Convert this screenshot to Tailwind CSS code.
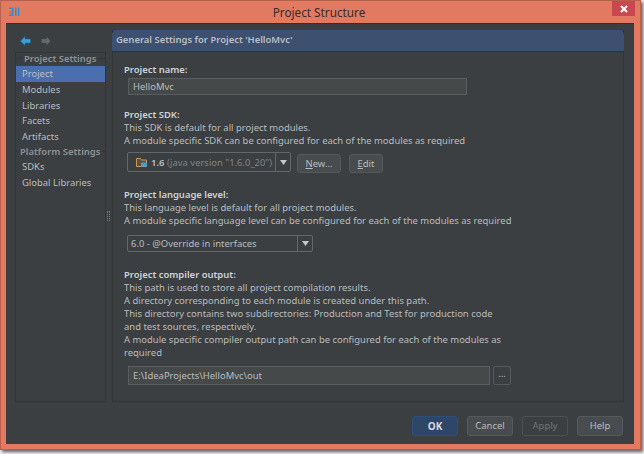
<!DOCTYPE html>
<html lang="en">
<head>
  <meta charset="UTF-8" />
  <title>Project Structure</title>
  <script src="https://cdn.jsdelivr.net/npm/@tailwindcss/browser@4"></script>
</head>
<body class="bg-[#f0f0f0] w-[644px] h-[454px] overflow-hidden font-['Noto_Sans','Open_Sans',sans-serif] text-[9.45px] leading-[13px] text-[#b9bcbf]">
  <!-- Window -->
  <div class="w-[641px] h-[450px] flex flex-col bg-[#e27a62] border border-[#b9604d] shadow-[2px_2px_3px_rgba(0,0,0,0.6)]">
    <!-- Title bar -->
    <div class="h-[22px] shrink-0 flex items-start relative">
      <svg class="ml-[7px] mt-[5px]" width="12" height="12" viewBox="0 0 12 12">
        <path d="M1 1.500h4.500v8.500h-4.500v-1.500h2.800v-5.500h-2.800z" fill="#2f8fd0"/>
        <path d="M7 1.500h1.500v8.500h-1.500zM9.800 1.500h1.500v8.500h-1.500z" fill="#2f8fd0"/>
        <rect x="1" y="5" width="3" height="3" fill="#d8702c"/>
      </svg>
      <div class="flex-1 pl-[6px] text-center text-[11.75px] leading-[23px] text-[#3c2b27]">Project Structure</div>
      <div class="w-[23px] h-[15px] mr-[5px] bg-[#c9474f] flex items-center justify-center text-white">
        <svg width="8" height="8" viewBox="0 0 8 8"><path d="M1 1l6 6M7 1l-6 6" stroke="#fff" stroke-width="2"/></svg>
      </div>
    </div>

    <!-- Client area -->
    <div class="mx-[5px] w-[628px] h-[421px] bg-[#3c3f41] border-t border-[#2f3133] flex flex-col">
      <div class="flex h-[378px] pl-[9px] pt-[6px] gap-[6px]">
        <!-- Sidebar -->
        <div class="w-[91px] flex flex-col">
          <div class="h-[22px] flex items-center gap-[10px] pl-[5px]">
            <svg width="11" height="10" viewBox="0 0 11 10"><path d="M5 0.500L0.500 5 5 9.500V7h5.500V3H5z" fill="#3f9fd8" stroke="#1c6a9a" stroke-width="0.600"/></svg>
            <svg width="10" height="10" viewBox="0 0 10 10"><path d="M5.500 0.500L9.500 5 5.500 9.500V7H0.500V3h5z" fill="#63676a"/></svg>
          </div>
          <div class="flex-1 border border-[#323436] flex flex-col relative">
            <div class="h-[14px] -mt-px pb-[2px] flex items-center gap-[2px] font-semibold text-[#8d9194]">
              <span class="w-[6px] h-px bg-[#323436]"></span><span class="whitespace-nowrap">Project Settings</span><span class="flex-1 h-px bg-[#323436]"></span>
            </div>
            <div class="h-[16px] pl-[6px] leading-[16px] bg-[#4b6eaf] text-[#bbbfc2]">Project</div>
            <div class="h-[16px] pl-[6px] leading-[16px]">Modules</div>
            <div class="h-[15px] pl-[6px] leading-[16px]">Libraries</div>
            <div class="h-[16px] pl-[6px] leading-[16px]">Facets</div>
            <div class="h-[15px] pl-[6px] leading-[16px]">Artifacts</div>
            <div class="h-[15px] flex items-center gap-[2px] font-semibold text-[#8d9194]">
              <span class="w-[2px] h-px bg-[#323436]"></span><span class="whitespace-nowrap">Platform Settings</span><span class="flex-1 h-px bg-[#323436]"></span>
            </div>
            <div class="h-[16px] pl-[6px] leading-[16px]">SDKs</div>
            <div class="h-[16px] pl-[6px] leading-[16px]">Global Libraries</div>
          </div>
        </div>

        <!-- Main panel -->
        <div class="w-[512px] flex flex-col border border-[#323436] border-t-0 relative">
          <div class="absolute left-[-6px] top-[181px] w-[3px] h-[10px] border-x border-dotted border-[#777]"></div>
          <div class="h-[22px] -mx-px shrink-0 bg-[#3e506f] rounded-t-[5px] border-b border-[#2f3133] pl-[4px] leading-[20px] font-semibold text-[#b9bec4]">General Settings for Project 'HelloMvc'</div>
          <div class="pl-[11px] pt-[11px] flex flex-col">
            <div class="font-semibold text-[#d0d3d5]">Project name:</div>
            <div class="ml-[4px] mt-[2px] w-[339px] h-[17px] bg-[#45494a] border border-[#5a5e60] pl-[4px] leading-[15px]">HelloMvc</div>

            <div class="mt-[13px] font-semibold text-[#d0d3d5]">Project SDK:</div>
            <div>This SDK is default for all project modules.</div>
            <div>A module specific SDK can be configured for each of the modules as required</div>
            <div class="flex items-start mt-[5px] ml-[3px]">
              <div class="w-[164px] h-[20px] border border-[#63676a] rounded-[2px] flex">
                <div class="flex-1 flex items-center pl-[8px] gap-[3px] whitespace-nowrap">
                  <svg width="12" height="11" viewBox="0 0 12 11"><path d="M0.500 9.500V1.500h4l1 1.500h5v6.500z" fill="#5a5040" stroke="#c69a5c"/><rect x="5" y="5.500" width="6" height="4" fill="#3f9fd8"/></svg>
                  <span><span class="font-semibold text-[#bbbfc2]">1.6</span> <span class="text-[#7f8386]">(java version "1.6.0_20")</span></span>
                </div>
                <div class="w-[15px] border-l border-[#63676a] flex items-center justify-center">
                  <svg width="7" height="5" viewBox="0 0 7 5"><path d="M0 0h7L3.500 5z" fill="#c4c7c9"/></svg>
                </div>
              </div>
              <div class="ml-[6px] mt-[2px] w-[44px] h-[19px] rounded-[3px] border border-[#55595b] bg-[#484c4e] text-center leading-[17px]"><span class="underline">N</span>ew...</div>
              <div class="ml-[8px] mt-[2px] w-[34px] h-[19px] rounded-[3px] border border-[#55595b] bg-[#484c4e] text-center leading-[17px]"><span class="underline">E</span>dit</div>
            </div>

            <div class="mt-[15px] font-semibold text-[#d0d3d5]">Project language level:</div>
            <div>This language level is default for all project modules.</div>
            <div>A module specific language level can be configured for each of the modules as required</div>
            <div class="flex mt-[8px] ml-[3px] w-[186px] h-[17px] border border-[#63676a] rounded-[2px]">
              <div class="flex-1 pl-[3px] leading-[15px]">6.0 - @Override in interfaces</div>
              <div class="w-[15px] border-l border-[#63676a] flex items-center justify-center">
                <svg width="7" height="5" viewBox="0 0 7 5"><path d="M0 0h7L3.500 5z" fill="#c4c7c9"/></svg>
              </div>
            </div>

            <div class="mt-[16px] font-semibold text-[#d0d3d5]">Project compiler output:</div>
            <div>This path is used to store all project compilation results.</div>
            <div>A directory corresponding to each module is created under this path.</div>
            <div>This directory contains two subdirectories: Production and Test for production code</div>
            <div>and test sources, respectively.</div>
            <div>A module specific compiler output path can be configured for each of the modules as</div>
            <div>required</div>
            <div class="flex mt-[7px] ml-[4px]">
              <div class="w-[362px] h-[19px] bg-[#45494a] border border-[#5a5e60] pl-[4px] leading-[17px]">E:\IdeaProjects\HelloMvc\out</div>
              <div class="ml-[3px] w-[18px] h-[19px] rounded-[2px] border border-[#55595b] text-center leading-[14px]">...</div>
            </div>
          </div>
        </div>
      </div>

      <!-- Footer buttons -->
      <div class="flex justify-end gap-[9px] pr-[11px] mt-[14px]">
        <div class="w-[46px] h-[20px] rounded-[3px] border border-[#2f4f78] bg-[#2e4668] text-center leading-[18px] text-[10px] font-bold text-[#d8dce0]">OK</div>
        <div class="w-[46px] h-[20px] rounded-[3px] border border-[#55595b] bg-[#484c4e] text-center leading-[18px]">Cancel</div>
        <div class="w-[46px] h-[20px] rounded-[3px] border border-[#4d5153] text-center leading-[18px] text-[#6f7376]">Apply</div>
        <div class="w-[46px] h-[20px] rounded-[3px] border border-[#55595b] bg-[#484c4e] text-center leading-[18px]">Help</div>
      </div>
    </div>
  </div>
</body>
</html>
